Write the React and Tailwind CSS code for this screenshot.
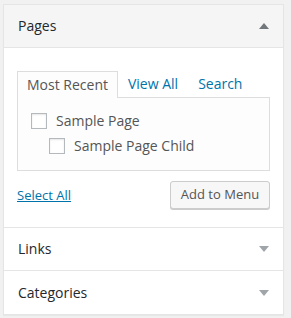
import { useState } from 'react'

const Arrow = ({ up, color }) => (
  <svg width="10" height="6" viewBox="0 0 10 6" className="shrink-0">
    {up ? <polygon points="5,0 10,6 0,6" fill={color} /> : <polygon points="0,0 10,0 5,6" fill={color} />}
  </svg>
)

const Checkbox = ({ checked, onChange }) => (
  <button
    onClick={onChange}
    className="w-4 h-4 shrink-0 bg-white border border-[#b4b9be] shadow-[inset_0_1px_2px_rgba(0,0,0,0.1)] flex items-center justify-center"
  >
    {checked && <span className="text-[#1e8cbe] text-[12px] leading-none">✓</span>}
  </button>
)

export default function App() {
  const [tab, setTab] = useState('recent')
  const [checked, setChecked] = useState({})
  const pages = [
    { name: 'Sample Page', depth: 0 },
    { name: 'Sample Page Child', depth: 1 },
  ]
  const tabs = [
    { id: 'recent', label: 'Most Recent' },
    { id: 'all', label: 'View All' },
    { id: 'search', label: 'Search' },
  ]

  return (
    <div className="w-[291px] h-[318px] bg-[#f1f1f1] pt-[4px] pl-[3px] font-['Open_Sans',sans-serif]">
      <div className="w-[281px] bg-white border border-[#e5e5e5] shadow-[0_1px_1px_rgba(0,0,0,0.04)]">
        {/* PAGES (open) */}
        <div className="h-[43px] bg-[#f5f5f5] border-b border-[#e5e5e5] flex items-center justify-between pl-[14px] pr-[14px]">
          <h3 className="text-[14px] text-[#23282d] leading-none">Pages</h3>
          <Arrow up color="#72777c" />
        </div>

        <div className="h-[180px] border-b border-[#e5e5e5] px-[13px] pt-[23px]">
          <ul className="flex h-[26px] text-[14px] leading-none">
            {tabs.map((t) => (
              <li key={t.id}>
                <button
                  onClick={() => setTab(t.id)}
                  className={
                    t.id === tab
                      ? 'h-[27px] pl-[9px] pr-[9px] border border-b-0 border-[#dddddd] bg-[#fdfdfd] text-[#555] relative z-10'
                      : 'h-[26px] px-[10px] text-[#0073aa]'
                  }
                >
                  {t.label}
                </button>
              </li>
            ))}
          </ul>
          <div className="h-[74px] border border-[#dddddd] bg-[#fdfdfd] pt-[15px] pl-[13px] flex flex-col gap-[9px]">
            {pages.map((p, i) => (
              <label
                key={p.name}
                className={`flex items-center gap-[9px] text-[14px] text-[#555] leading-none h-4 ${p.depth ? 'pl-[18px]' : ''}`}
              >
                <Checkbox checked={!!checked[i]} onChange={() => setChecked({ ...checked, [i]: !checked[i] })} />
                {p.name}
              </label>
            ))}
          </div>
          <div className="flex items-center justify-between mt-[10px]">
            <a
              href="#"
              onClick={(e) => {
                e.preventDefault()
                setChecked({ 0: true, 1: true })
              }}
              className="text-[13px] text-[#0073aa] underline pt-[2px]"
            >
              Select All
            </a>
            <button className="h-[28px] w-[100px] bg-[#f7f7f7] border border-[#cccccc] rounded-[3px] shadow-[0_1px_0_#cccccc] text-[13px] text-[#555]">
              Add to Menu
            </button>
          </div>
        </div>

        {/* COLLAPSED SECTIONS */}
        {['Links', 'Categories'].map((s, i) => (
          <div
            key={s}
            className={`h-[43px] flex items-center justify-between pl-[14px] pr-[14px] ${i === 0 ? 'border-b border-[#e5e5e5]' : 'h-[42px]'}`}
          >
            <h3 className="text-[14px] text-[#23282d] leading-none">{s}</h3>
            <Arrow color="#a0a5aa" />
          </div>
        ))}
      </div>
    </div>
  )
}
